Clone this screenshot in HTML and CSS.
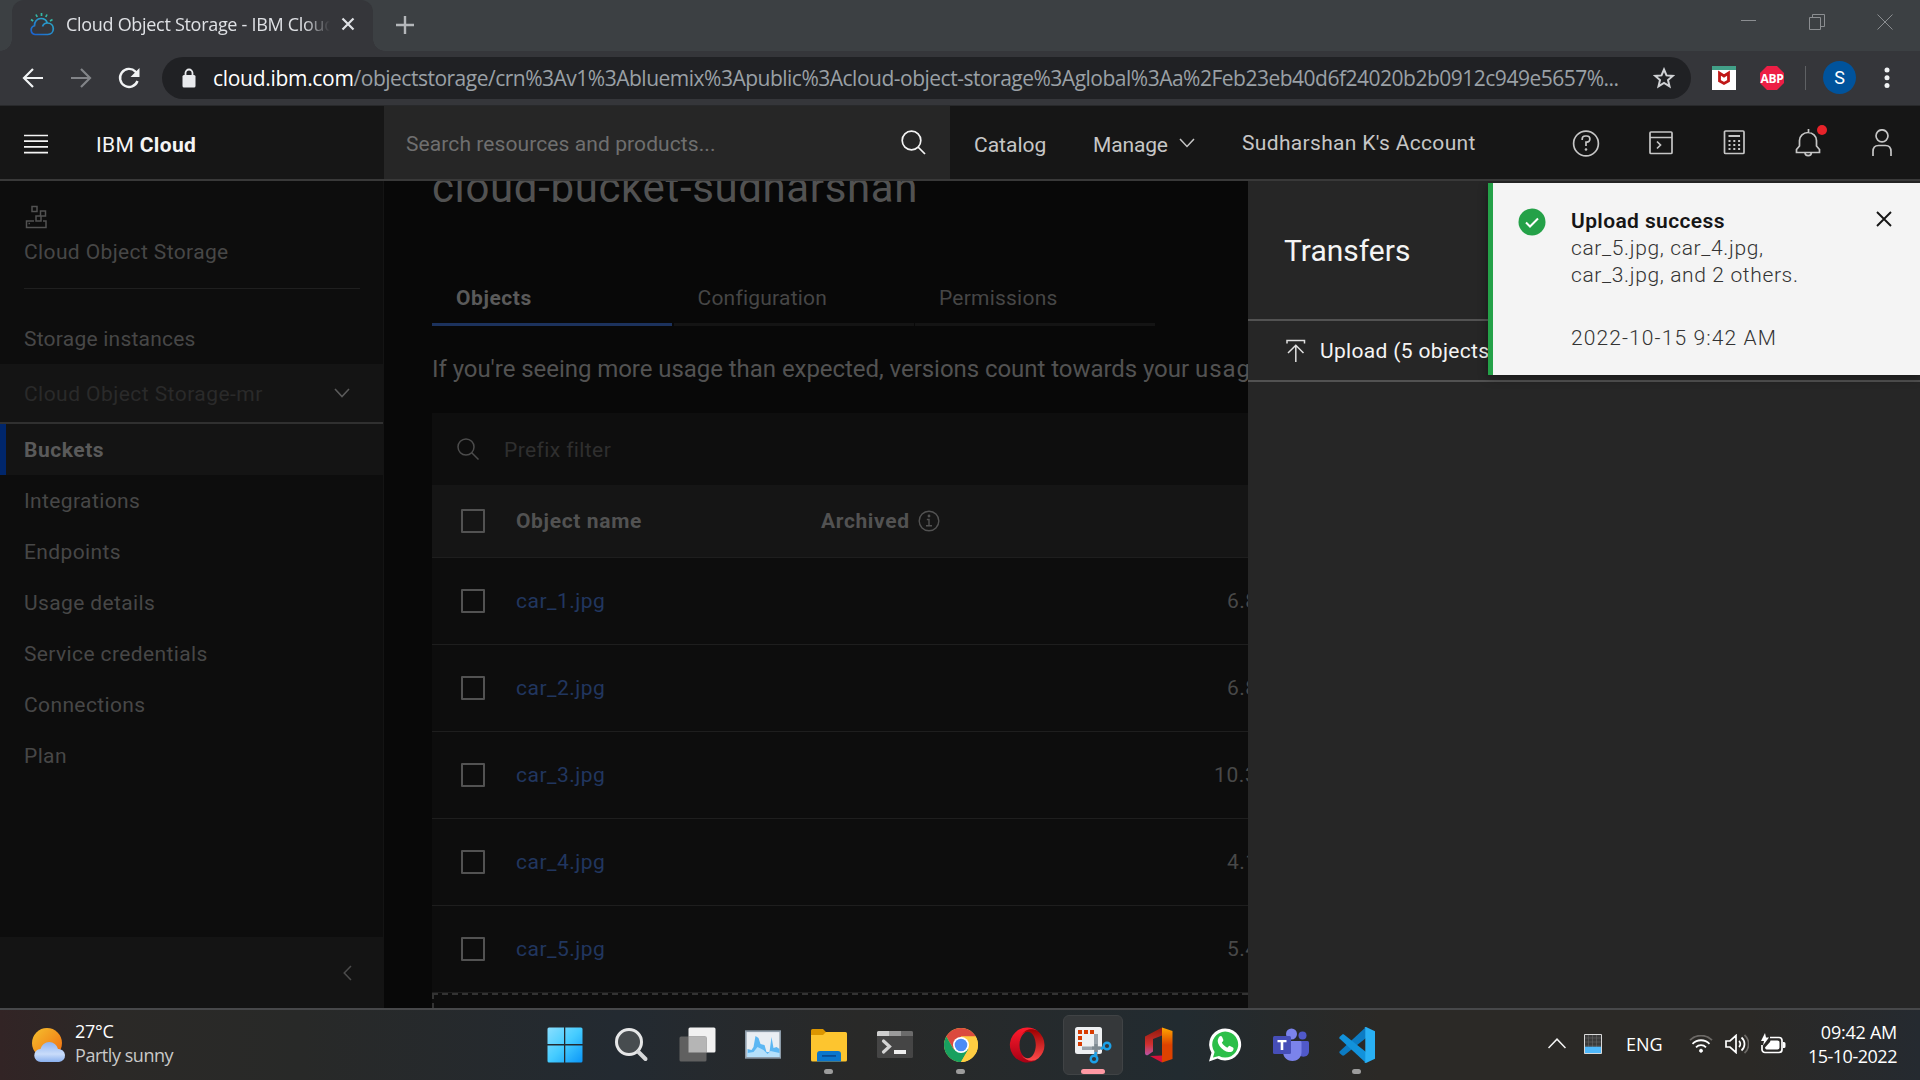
FILE: index.html
```html
<!DOCTYPE html>
<html lang="en">
<head>
<meta charset="utf-8">
<title>Cloud Object Storage - IBM Cloud</title>
<link rel="stylesheet" href="styles.css">
</head>
<body>
<div class="screen">

<div class="tabstrip">
  <div class="tab">
    <svg class="favicon" width="26" height="24" viewBox="0 0 26 24" fill="none" stroke-width="1.7">
      <defs><linearGradient id="cl" x1="0" y1="1" x2="1" y2="0"><stop offset="0" stop-color="#1a5fd0"/><stop offset="1" stop-color="#2fb4c8"/></linearGradient></defs>
      <path stroke="url(#cl)" d="M6 22.500a4.500 4.500 0 0 1-.5-8.800C5.500 9.500 8 6.500 12 6.500c3.500 0 5.500 2 6.300 4.500 3.500 0 6 2.300 6 5.800 0 3.400-2.500 5.700-5.500 5.700zM13.500 14.500c.8-2.300 2.500-3.500 4.800-3.500"/>
      <path stroke="#35b7a6" d="M12.500 1v3M7 2.500l1.200 2.500M18 2.500L16.800 5M2 7.500L4.200 9M23.500 7.500L21 9"/>
    </svg>
    <span class="tab-title">Cloud Object Storage - IBM Cloud</span>
    <svg class="tab-close" width="14" height="14" viewBox="0 0 14 14" stroke="#dfe1e5" stroke-width="2.200"><path d="M1.500 1.500l11 11M12.500 1.500l-11 11"/></svg>
  </div>
  <svg class="newtab" width="18" height="18" viewBox="0 0 18 18" stroke="#b4b7ba" stroke-width="2.400"><path d="M9 0v18M0 9h18"/></svg>
  <div class="wincontrols">
    <svg width="16" height="16" viewBox="0 0 16 16" stroke="#8b8e91" fill="none"><path d="M0 6.500h15"/></svg>
    <svg width="16" height="16" viewBox="0 0 16 16" stroke="#8b8e91" fill="none"><path d="M.5 3.500h11v12H.5zM3.500 3.500v-3h12v12h-4"/></svg>
    <svg width="16" height="16" viewBox="0 0 16 16" stroke="#8b8e91" fill="none"><path d="M.5.5l15 15M15.500.5l-15 15"/></svg>
  </div>
</div>

<div class="toolbar">
  <svg class="nav-ic" width="24" height="24" viewBox="0 0 24 24" fill="none" stroke="#f1f3f4" stroke-width="2.200"><path d="M22 12H4M12 3l-9 9 9 9"/></svg>
  <svg class="nav-ic" width="24" height="24" viewBox="0 0 24 24" fill="none" stroke="#828488" stroke-width="2.200"><path d="M2 12h18M12 3l9 9-9 9"/></svg>
  <svg class="nav-ic" width="24" height="24" viewBox="0 0 24 24" fill="none" stroke="#f1f3f4" stroke-width="2.400"><path d="M20.500 15A9 9 0 1 1 18.500 5.600L21 8"/><path fill="#f1f3f4" stroke="none" d="M22.500 2v9h-9z"/></svg>
  <div class="omnibox">
    <svg class="lock" width="14" height="20" viewBox="0 0 14 20"><rect x="0.500" y="7" width="13" height="12.500" rx="1.500" fill="#e8eaed"/><path d="M3.500 8V5a3.500 3.500 0 0 1 7 0v3" fill="none" stroke="#e8eaed" stroke-width="1.800"/></svg>
    <span class="url"><b>cloud.ibm.com</b>/objectstorage/crn%3Av1%3Abluemix%3Apublic%3Acloud-object-storage%3Aglobal%3Aa%2Feb23eb40d6f24020b2b0912c949e5657%...</span>
    <svg class="star" width="22" height="22" viewBox="0 0 22 22" fill="none" stroke="#d0d2d5" stroke-width="2"><path d="M11 2.500l2.500 5.900 6.300.5-4.800 4.200 1.500 6.200L11 16l-5.500 3.300L7 13.100 2.200 8.900l6.300-.5z"/></svg>
  </div>
  <svg class="ext" width="24" height="24" viewBox="0 0 24 24"><path fill="#fff" d="M0 0h24v24H0z"/><path fill="#42a088" d="M0 0h24v4H0z"/><path fill="none" stroke="#c01818" stroke-width="2.800" d="M7.500 7v8L12 17.500l4.500-2.500V7L12 10z"/></svg>
  <svg class="ext abp" width="24" height="24" viewBox="0 0 24 24"><path fill="#ed1e45" d="M7 0h10l7 7v10l-7 7H7l-7-7V7z"/><text x="12" y="16.500" text-anchor="middle">ABP</text></svg>
  <i class="tb-div"></i>
  <span class="avatar">S</span>
  <svg class="dots" width="6" height="22" viewBox="0 0 6 22" fill="#f1f3f4"><circle cx="3" cy="3" r="2.500"/><circle cx="3" cy="10.700" r="2.500"/><circle cx="3" cy="18.400" r="2.500"/></svg>
</div>

<header class="ibm">
  <div class="brand">
    <svg width="24" height="20" viewBox="0 0 24 20" stroke="#f4f4f4" stroke-width="1.700"><path d="M0 1.500h24M0 7.200h24M0 12.900h24M0 18.600h24"/></svg>
    <span class="brand-name">IBM <b>Cloud</b></span>
  </div>
  <div class="search"><span>Search resources and products...</span>
    <svg width="25" height="25" viewBox="0 0 25 25" fill="none" stroke="#f4f4f4" stroke-width="1.700"><circle cx="10.500" cy="10.500" r="9.300"/><path d="M17 17l7 7"/></svg>
  </div>
  <span class="link l1">Catalog</span>
  <span class="link l2">Manage</span>
  <svg class="chev" width="16" height="10" viewBox="0 0 16 10" fill="none" stroke="#c6c6c6" stroke-width="1.500"><path d="M1 1l7 7.500L15 1"/></svg>
  <span class="link l3">Sudharshan K's Account</span>
  <div class="hicons">
    <svg width="28" height="28" viewBox="0 0 28 28" fill="none" stroke="#c6c6c6" stroke-width="1.700"><circle cx="14" cy="14.500" r="12.400"/><path d="M10.200 11V10a3 3 0 0 1 3-3h1.600a3.100 3.100 0 0 1 0 6.200H14V17"/><circle cx="14" cy="20.500" r="1" fill="#c6c6c6" stroke-width=".6"/></svg>
    <svg width="28" height="28" viewBox="0 0 28 28" fill="none" stroke="#c6c6c6" stroke-width="1.700"><rect x="4" y="3" width="22" height="21.500" rx="1"/><path d="M4 8.500h22M11 12.500l3.500 3.500-3.500 3.500"/></svg>
    <svg width="28" height="28" viewBox="0 0 28 28" fill="none" stroke="#c6c6c6" stroke-width="1.700"><rect x="4.500" y="2" width="19.500" height="22.500" rx="1"/><path stroke-width="2" d="M8.500 7h11.500"/><path stroke-width="2" stroke-dasharray="2 2.800" d="M8.500 12h11.600M8.500 16h11.600M8.500 20h11.600"/></svg>
    <svg width="28" height="28" viewBox="0 0 28 28" fill="none" stroke="#c6c6c6" stroke-width="1.700"><path d="M14.500 0v3.500M2.500 23.500v-3l3-3.500v-5.500a8.500 8 0 0 1 17 0V17l3 3.500v3zM11 23.500a3.200 3.200 0 0 0 6.400 0"/></svg>
    <svg width="28" height="28" viewBox="0 0 28 28" fill="none" stroke="#c6c6c6" stroke-width="1.700"><circle cx="14" cy="6.800" r="6"/><path d="M5 27v-4.500c0-4 2-6 5.500-6h7c3.500 0 5.500 2 5.500 6V27"/></svg>
    <i class="reddot"></i>
  </div>
</header>

<div class="content">
  <nav class="side">
    <div class="side-top">
      <svg width="24" height="24" viewBox="0 0 24 24" fill="none" stroke="#525252" stroke-width="1.500"><path d="M8 1.500h5v5H8zM16.500 6h5v5h-5zM12 11h5v5h-5zM10 16H2.500v6.500H22V16h-3M4.500 18.500h1.500"/></svg>
      <span>Cloud Object Storage</span>
    </div>
    <span class="si inst">Storage instances</span>
    <div class="dd"><span>Cloud Object Storage-mr</span><svg width="16" height="10" viewBox="0 0 16 10" fill="none" stroke="#5a5a5a" stroke-width="1.600"><path d="M1 1l7 7.500L15 1"/></svg></div>
    <span class="si on">Buckets</span>
    <span class="si">Integrations</span>
    <span class="si">Endpoints</span>
    <span class="si">Usage details</span>
    <span class="si">Service credentials</span>
    <span class="si">Connections</span>
    <span class="si">Plan</span>
    <div class="collapse"><svg width="9" height="16" viewBox="0 0 9 16" fill="none" stroke="#4c4c4c" stroke-width="1.500"><path d="M8 1L1.200 8 8 15"/></svg></div>
  </nav>

  <main class="main">
    <h1>cloud-bucket-sudharshan</h1>
    <div class="tabs"><span class="t on">Objects</span><span class="t">Configuration</span><span class="t">Permissions</span></div>
    <p class="note">If you're seeing more usage than expected, versions count towards your <span>usage</span></p>
    <div class="filter"><svg width="22" height="22" viewBox="0 0 22 22" fill="none" stroke="#4c4c4c" stroke-width="1.500"><circle cx="9" cy="9" r="8"/><path d="M14.500 14.500l7 7"/></svg><span>Prefix filter</span></div>
    <div class="row head"><i class="cb"></i><span class="name">Object name</span><span class="arch">Archived</span>
      <svg width="22" height="22" viewBox="0 0 22 22" fill="none" stroke="#525252" stroke-width="1.400"><circle cx="11" cy="11" r="9.800"/><path d="M8.800 9.500H11v6M8 15.800h6"/><circle cx="11" cy="6" r=".7" fill="#525252"/></svg></div>
    <div class="row"><i class="cb"></i><span class="name">car_1.jpg</span><span class="size">6.8</span></div>
    <div class="row"><i class="cb"></i><span class="name">car_2.jpg</span><span class="size">6.8</span></div>
    <div class="row"><i class="cb"></i><span class="name">car_3.jpg</span><span class="size wide">10.3</span></div>
    <div class="row"><i class="cb"></i><span class="name">car_4.jpg</span><span class="size">4.1</span></div>
    <div class="row"><i class="cb"></i><span class="name">car_5.jpg</span><span class="size">5.4</span></div>
    <div class="drop"></div>
  </main>

  <aside class="panel">
    <div class="p-title">Transfers</div>
    <div class="p-row"><svg width="20" height="24" viewBox="0 0 20 24" fill="none" stroke="#e0e0e0" stroke-width="1.500"><path d="M1 4.500V1.500h17.500v3M9.800 23V6.500M2 14l7.800-7.700L17.500 14"/></svg><span>Upload (5 objects)</span></div>
  </aside>

  <div class="toast">
    <svg class="ok" width="28" height="28" viewBox="0 0 28 28"><circle cx="14" cy="14" r="13.500" fill="#24a148"/><path d="M8 14.500l4 4 8-8" fill="none" stroke="#fff" stroke-width="2"/></svg>
    <div class="toast-body"><b>Upload success</b><span>car_5.jpg, car_4.jpg,</span><span>car_3.jpg, and 2 others.</span><span class="date">2022-10-15 9:42 AM</span></div>
    <svg class="x" width="16" height="16" viewBox="0 0 16 16" stroke="#161616" stroke-width="1.900"><path d="M1 1l14 14M15 1L1 15"/></svg>
  </div>
</div>

<footer class="taskbar">
  <div class="weather">
    <svg width="36" height="36" viewBox="0 0 36 36"><defs><linearGradient id="sun" x1="0" y1="0" x2="1" y2="1"><stop offset="0" stop-color="#f5c12e"/><stop offset="1" stop-color="#f06a10"/></linearGradient><linearGradient id="cd" x1="0" y1="0" x2="0" y2="1"><stop offset="0" stop-color="#8fb4f2"/><stop offset=".6" stop-color="#c9dcfa"/><stop offset="1" stop-color="#8ab0ee"/></linearGradient></defs><circle cx="16" cy="16" r="15" fill="url(#sun)"/><path fill="url(#cd)" d="M10 35a6.500 6.500 0 0 1-.5-13 9 9 0 0 1 17.500 0 6.500 6.500 0 0 1 1 13z"/></svg>
    <div><span>27°C</span><span class="dim">Partly sunny</span></div>
  </div>

  <div class="apps">
    <div class="app"><svg width="36" height="36" viewBox="0 0 36 36"><defs><linearGradient id="wn" x1="0" y1="0" x2="1" y2="1"><stop offset="0" stop-color="#8adfff"/><stop offset=".5" stop-color="#45ccff"/><stop offset="1" stop-color="#0a96f8"/></linearGradient></defs><path fill="url(#wn)" d="M2 .5h15v16.600H.500V2A1.500 1.500 0 0 1 2 .5zM18.300.5H34A1.500 1.500 0 0 1 35.500 2v15.100H18.300zM.5 18.500H17v17H2A1.500 1.500 0 0 1 .5 34zM18.300 18.500h17.200V34a1.500 1.500 0 0 1-1.500 1.500H18.300z"/></svg></div>
    <div class="app"><svg width="36" height="36" viewBox="0 0 36 36"><circle cx="16" cy="15" r="12.500" fill="#474c4f" stroke="#e6e7e8" stroke-width="3"/><path d="M25 24.500l7.500 7.500" stroke="#d6d8da" stroke-width="4" stroke-linecap="round"/></svg></div>
    <div class="app"><svg width="38" height="36" viewBox="0 0 38 36"><rect x="10.500" y="0.500" width="27" height="25" rx="1.500" fill="#f1f1f1"/><rect x="1.500" y="9.500" width="27" height="25" rx="1.500" fill="#606060"/><path fill="#b5b5b5" d="M10.500 9.500h18v16h-18z"/></svg></div>
    <div class="app"><svg width="36" height="36" viewBox="0 0 36 36"><rect x=".7" y="4.200" width="34.600" height="26.600" fill="#e9eef3" stroke="#8c9ba8" stroke-width="1.800"/><path fill="#5cb7f3" d="M2.500 22l4 1 2-3 2-11 3 2 2 6 4 1 2 7h3l2-15 2 11 3-1 3 2v7.500H2.500z"/><path fill="#b5e0fb" d="M2.500 26l6-1 4-5 6 3 4 4 3-3 9 2v4H2.500z"/></svg></div>
    <div class="app run"><svg width="36" height="36" viewBox="0 0 36 36"><path fill="#dc9600" d="M0 3.500A1.500 1.500 0 0 1 1.500 2H12l3 3v6H0z"/><path fill="#fdc52f" d="M0 8h12l3-3h19.500A1.500 1.500 0 0 1 36 6.500V33a1.500 1.500 0 0 1-1.500 1.500h-33A1.500 1.500 0 0 1 0 33z"/><path fill="#0b76cc" d="M6 34.500V27a3 3 0 0 1 3-3h18a3 3 0 0 1 3 3v7.500z"/><path fill="#084c94" d="M11 28h14v1.800H11z"/></svg></div>
    <div class="app"><svg width="36" height="36" viewBox="0 0 36 36"><rect y="4" width="36" height="27" rx="1.500" fill="#454545"/><path fill="#cfcfcf" d="M0 9V5.500A1.500 1.500 0 0 1 1.500 4H12v5z"/><path fill="#9b9b9b" d="M12 4h12v5H12z"/><path fill="#6b6b6b" d="M24 4h10.500A1.500 1.500 0 0 1 36 5.500V9H24z"/><path d="M6.500 14l6 5.500-6 5.500" fill="none" stroke="#d5d5d5" stroke-width="3.200" stroke-linecap="round"/><path fill="#eee" d="M17 23h12v4H17z"/></svg></div>
    <div class="app run"><svg width="36" height="36" viewBox="0 0 36 36"><circle cx="18" cy="18" r="17" fill="#ffcd42"/><path fill="#db4a3e" d="M3.300 9.500A17 17 0 0 1 32.700 9.500H18L10.600 22.200z"/><path fill="#18a05f" d="M3.300 9.500A17 17 0 0 0 18 35l7.400-12.700H10.600z"/><path fill="#ffcd42" d="M18 35A17 17 0 0 0 32.700 9.500H18l7.400 12.800z"/><circle cx="18" cy="18" r="8" fill="#fff"/><circle cx="18" cy="18" r="6.300" fill="#4b8bf5"/></svg></div>
    <div class="app"><svg width="36" height="36" viewBox="0 0 36 36"><defs><linearGradient id="op" x1="0" y1="0" x2="0" y2="1"><stop offset="0" stop-color="#ff1b2d"/><stop offset="1" stop-color="#a70014"/></linearGradient><linearGradient id="oq" x1="0" y1="0" x2="0" y2="1"><stop offset="0" stop-color="#9c0000"/><stop offset="1" stop-color="#ff4b4b"/></linearGradient></defs><path fill="url(#op)" d="M18 .5a17.500 17.500 0 1 0 11.500 31C22 36.300 10.500 31 10.500 18S22 -.3 29.500 4.500A17.500 17.500 0 0 0 18 .5z"/><path fill="url(#oq)" d="M12.400 8C17 .7 25 1 29.500 4.800a17.500 17.500 0 0 1 0 26.400c-5 4-12.500 3.500-17.100-3.200C20 36 26.800 28 26.800 18S20 0 12.400 8z"/></svg></div>
    <div class="app active"><svg width="38" height="38" viewBox="0 0 38 38"><rect x="1" y="1" width="27" height="27" rx="2.500" fill="#eef0f2"/><path fill="#d83b01" d="M4 4h4v4H4zM10 4h4v4h-4zM16 4h4v4h-4zM4 10h4v4H4zM4 16h4v4H4z"/><path fill="#9aa3ab" d="M20 8h4v18h-4zM8 20.500h18v3.500H8z"/><path stroke="#7e8991" stroke-width="3" d="M22 18v12M18 22h11"/><circle cx="33" cy="20" r="3.300" fill="none" stroke="#1ba1e8" stroke-width="2.400"/><circle cx="20" cy="33" r="3.300" fill="none" stroke="#1ba1e8" stroke-width="2.400"/><path stroke="#1ba1e8" stroke-width="2.500" d="M27 23l3-2M21 30l1-4"/></svg></div>
    <div class="app"><svg width="30" height="36" viewBox="0 0 30 36"><defs><linearGradient id="of" x1="0" y1="0" x2="0" y2="1"><stop offset="0" stop-color="#8f1a0b"/><stop offset=".6" stop-color="#d0302f"/><stop offset="1" stop-color="#b955a8"/></linearGradient><linearGradient id="og" x1="0" y1="0" x2="0" y2="1"><stop offset="0" stop-color="#ffa800"/><stop offset=".5" stop-color="#dd4200"/></linearGradient></defs><path fill="url(#of)" d="M1 9.500L18 .5v8L9 12v12.500L4 28c-2 1-3-.5-3-2z"/><path fill="url(#og)" d="M18 .5l10.500 3.600v28L18 35.500z"/><path fill="#d6123c" d="M6 29l12-.5v7z"/></svg></div>
    <div class="app"><svg width="34" height="36" viewBox="0 0 34 36"><path fill="#fff" d="M1 34.500l2.500-8.700A16 16 0 1 1 9.500 31.500z"/><path fill="#2cbf49" d="M5 30.500l1.600-5.400A13 13 0 1 1 11 29z"/><path fill="#fff" d="M11.500 9.500c.8-.7 2-.7 2.500.3l1.300 3c.4 1-.8 2-1.500 2.800 1.200 2.300 3.300 4.200 5.600 5.200.8-.8 1.600-2.300 2.600-1.900l3 1.500c1.200.7.3 3.200-.9 4-5.500 3.300-16.500-6.600-14-12.500.3-.8.700-1.700 1.400-2.400z"/></svg></div>
    <div class="app"><svg width="38" height="36" viewBox="0 0 38 36"><circle cx="30.500" cy="8.500" r="4" fill="#5059c9"/><path fill="#5059c9" d="M26 14h9.500A1.500 1.500 0 0 1 37 15.500V24c0 7-8 7-11 3z"/><circle cx="19.500" cy="7" r="5.500" fill="#7b83eb"/><path fill="#7b83eb" d="M12 14h16a1.500 1.500 0 0 1 1.500 1.500V25c0 12-18 12-18.500 0z"/><rect x="1" y="9" width="18" height="18" rx="1.500" fill="#464eb8"/><path fill="#fff" d="M5.500 13h9v2.200h-3.200V23H8.700v-7.800H5.500z"/></svg></div>
    <div class="app run"><svg width="38" height="38" viewBox="0 0 38 38"><path fill="#0c7cc4" d="M1.500 25.500a2 2 0 0 0 0 1.500l2.500 2.300c.7.600 1.500.6 2.300 0L28 12V1z"/><path fill="#1292db" d="M1.500 12.500a2 2 0 0 1 0-1.500L4 8.800c.7-.6 1.500-.6 2.300 0L28 26v11z"/><path fill="#29b0f4" d="M28 1l9 4.300v27.400L28 37c-.8.300-1.500 0-2-.5l1.300.3V1.500L26 1.400c.5-.4 1.200-.7 2-.4z"/></svg></div>
  </div>

  <div class="tray">
    <svg class="up" width="18" height="11" viewBox="0 0 18 11" fill="none" stroke="#f3f3f3" stroke-width="1.500"><path d="M.5 10L9 1.200l8.500 8.800"/></svg>
    <svg class="meter" width="18" height="20" viewBox="0 0 18 20"><path fill="#3a3a3a" d="M0 0h18v20H0z"/><path stroke="#666" stroke-width=".6" d="M4.500 0v13M8.500 0v13M12.500 0v13M0 4h17M0 8h17M0 12h17"/><path fill="#4fb8fb" d="M0 12.700h17v6.800H0z"/><path fill="none" stroke="#d8d8d8" d="M.5.5h17v19H.5z"/></svg>
    <span class="eng">ENG</span>
    <svg class="wifi" width="24" height="18" viewBox="0 0 24 18" fill="none" stroke="#fff" stroke-width="1.800"><path stroke="#6c6966" d="M1 5.200a15.500 15.500 0 0 1 22 0"/><path d="M3.500 8.800a12 12 0 0 1 17 0M7 12.300a7 7 0 0 1 10 0"/><circle cx="12" cy="15.700" r="1.500" fill="#fff" stroke-width="1"/></svg>
    <svg class="vol" width="24" height="20" viewBox="0 0 24 20" fill="none" stroke="#fff" stroke-width="1.700"><path d="M1 7h4l6-5.500v17L5 13H1zM14 7a4 4 0 0 1 0 6M16.500 3.500a8.500 8.500 0 0 1 0 13"/><path stroke="#6c6966" d="M19.500 1a12 12 0 0 1 0 18"/></svg>
    <svg class="bat" width="25" height="21" viewBox="0 0 25 21"><path fill="none" stroke="#fff" stroke-width="1.700" d="M9 4.500h9a3 3 0 0 1 3 3v9a3 3 0 0 1-3 3H4a3 3 0 0 1-3-3V12"/><path fill="#fff" d="M9.500 7.500h7a2 2 0 0 1 2 2v5a2 2 0 0 1-2 2h-11a2 2 0 0 1-1.500-2L9 9zM22 9h1a1.500 1.500 0 0 1 1.500 1.500v3A1.500 1.500 0 0 1 23 15h-1zM4 0L0 8h3l-1 4.500L8 4.500H5z"/></svg>
    <div class="clock"><span class="c1">09:42 AM</span><span class="c2">15-10-2022</span></div>
  </div>
</footer>
</div>
</body>
</html>
```
FILE: styles.css
```css
* { box-sizing: border-box; }
body { margin: 0; background: #000; }
svg { display: block; flex: none; }
.screen { width: 1920px; height: 1080px; overflow: hidden; display: flex; flex-direction: column; font-family: Roboto, "Liberation Sans", sans-serif; white-space: nowrap; }

/* browser chrome */
.tabstrip, .toolbar { font-family: "Open Sans", "Noto Sans", sans-serif; display: flex; flex: none; }
.tabstrip { height: 51px; background: #3c4043; padding-left: 12px; align-items: center; }
.tab { position: relative; width: 361px; height: 51px; background: #35363a; border-radius: 12px 12px 0 0; display: flex; align-items: center; padding: 0 18px 3px 17px; }
.tab::before, .tab::after { content: ""; position: absolute; bottom: 0; width: 12px; height: 12px; }
.tab::before { left: -12px; background: radial-gradient(circle at 0 0, transparent 11.500px, #35363a 12px); }
.tab::after { right: -12px; background: radial-gradient(circle at 100% 0, transparent 11.500px, #35363a 12px); }
.favicon { margin-right: 11px; }
.tab-title { width: 265px; overflow: hidden; font-size: 18px; letter-spacing: -0.300px; color: #dfe1e5; -webkit-mask-image: linear-gradient(90deg, #000 238px, transparent 264px); mask-image: linear-gradient(90deg, #000 238px, transparent 264px); }
.tab-close { margin-left: 10px; }
.newtab { margin-left: 23px; margin-bottom: 1px; }
.wincontrols { margin-left: auto; display: flex; gap: 52px; padding: 0 27px 8px 0; }
.toolbar { height: 55px; background: #35363a; border-bottom: 1px solid #28292b; align-items: center; padding: 0 30px 1px 21px; }
.nav-ic { margin-right: 24px; }
.omnibox { width: 1529px; height: 42px; margin-left: -3px; border-radius: 21px; background: #202124; display: flex; align-items: center; padding: 0 16px 0 20px; flex: none; }
.lock { margin-right: 17px; }
.url { width: 1407px; font-size: 21px; letter-spacing: -0.500px; color: #9aa0a6; }
.url b { font-weight: 400; color: #fff; letter-spacing: -0.300px; }
.star { margin-left: 33px; }
.ext { margin-left: 21px; }
.abp { margin-left: 24px; }
.abp text { font: 700 12px "Open Sans", sans-serif; letter-spacing: -0.300px; fill: #fff; }
.tb-div { width: 1px; height: 24px; background: #5f6164; margin-left: 21px; }
.avatar { width: 33px; height: 33px; margin-left: 17px; border-radius: 50%; background: #00539c; color: #fff; font: 18px/33px Roboto, sans-serif; text-align: center; }
.dots { margin-left: 28px; }

/* cloud header */
.ibm { height: 75px; flex: none; background: #161616; border-bottom: 2px solid #393939; display: flex; align-items: center; font-size: 21px; color: #c6c6c6; }
.brand { width: 384px; display: flex; align-items: center; padding: 2px 0 0 24px; gap: 48px; color: #f4f4f4; }
.brand-name { letter-spacing: 0.350px; padding-top: 2px; }
.brand-name b { font-weight: 700; }
.search { width: 566px; height: 73px; background: #262626; color: #6f6f6f; display: flex; align-items: center; justify-content: space-between; padding: 0 24px 0 22px; letter-spacing: 0.090px; }
.search span { padding-top: 2px; }
.link { padding-top: 4px; letter-spacing: -0.150px; }
.l1 { margin-left: 24px; width: 119px; letter-spacing: 0; }
.l2 { width: 86px; }
.chev { margin-right: 47px; }
.link.l3 { padding: 0; width: 330px; letter-spacing: 0.330px; }
.hicons { position: relative; display: flex; gap: 46px; }
.reddot { position: absolute; left: 245px; top: -4px; width: 10px; height: 10px; border-radius: 50%; background: #e8232a; }

/* page */
.content { position: relative; height: 827px; flex: none; display: flex; overflow: hidden; font-size: 21px; }
.side { width: 384px; flex: none; background: #0d0d0d; border-right: 1px solid #141414; color: #474747; display: flex; flex-direction: column; letter-spacing: 0.380px; }
.side-top { margin: 24px 23px 0 24px; height: 84px; border-bottom: 1px solid #1f1f1f; display: flex; flex-direction: column; gap: 11px; }
.si { height: 51px; line-height: 53px; padding-left: 24px; }
.inst { margin: 24px 0 0; letter-spacing: 0.230px; }
.dd { height: 60px; background: #141414; border-bottom: 2px solid #303030; color: #2a2a2a; display: flex; align-items: center; justify-content: space-between; padding: 0 33px 0 24px; letter-spacing: 0.450px; }
.dd span { padding-top: 2px; }
.on.si { background: #141414; border-left: 6px solid #00266b; padding-left: 18px; color: #5a5a5a; font-weight: 700; letter-spacing: 0.550px; }
.collapse { margin-top: auto; height: 71px; background: #141414; display: flex; justify-content: flex-end; align-items: center; padding-right: 31px; }

.main { width: 864px; flex: none; background: #080808; padding-left: 48px; overflow: hidden; color: #525252; letter-spacing: 0.350px; }
h1 { margin: -18px 0 0; font-size: 42px; line-height: 50px; font-weight: 400; color: #525252; letter-spacing: 0.640px; }
.tabs { display: flex; gap: 1.500px; margin-top: 56px; height: 57px; }
.t { width: 240px; border-bottom: 3px solid #141414; padding: 0 24px; line-height: 58px; color: #464646; letter-spacing: 0.220px; }
.t.on { border-color: #1c325d; color: #5a5a5a; font-weight: 700; letter-spacing: 0.550px; }
.note { margin: 29px 0 0; font-size: 24px; line-height: 28px; width: 1000px; letter-spacing: -0.050px; }
.note span { letter-spacing: 1px; }
.filter { height: 72px; margin-top: 30px; background: #0e0e0e; display: flex; align-items: center; padding-left: 25px; gap: 25px; color: #2f2f2f; letter-spacing: 0.400px; }
.filter span { padding-top: 1px; }
.row { height: 87px; background: #0d0d0d; border-top: 1px solid #1e1e1e; display: flex; align-items: center; padding-left: 29px; }
.row.head { height: 72px; border: 0; background: #151515; font-weight: 700; letter-spacing: 0.640px; }
.cb { width: 24px; height: 24px; border: 2px solid #525252; border-radius: 1px; flex: none; }
.name { width: 305px; margin-left: 31px; color: #21365f; flex: none; letter-spacing: 0.480px; }
.head .name { color: #525252; letter-spacing: 0.640px; }
.arch { margin-right: 8px; }
.size { margin-left: 406px; flex: none; color: #484848; letter-spacing: 0.500px; }
.size.wide { margin-left: 393px; letter-spacing: 0.600px; }
.drop { height: 60px; border-top: 1px solid #1e1e1e; background: repeating-linear-gradient(90deg, #333 0 6px, transparent 6px 10px) 0 0 / 100% 2px no-repeat, repeating-linear-gradient(180deg, #333 0 6px, transparent 6px 10px) 0 0 / 2px 100% no-repeat, #0d0d0d; }

.panel { flex: 1; background: #262626; color: #f4f4f4; }
.p-title { height: 140px; border-bottom: 2px solid #525252; line-height: 139px; padding-left: 36px; font-size: 30px; }
.p-row { height: 61px; border-bottom: 2px solid #525252; display: flex; align-items: center; padding-left: 38px; gap: 14px; letter-spacing: 0.330px; }
.toast { position: absolute; left: 1488px; top: 2px; width: 432px; height: 192px; background: #f4f4f4; border-left: 5px solid #24a148; box-shadow: 0 3px 9px rgba(0, 0, 0, .35); color: #333; display: flex; padding: 25px 28px 0 25px; }
.toast-body { margin-left: 25px; width: 305px; display: flex; flex-direction: column; line-height: 27px; }
.toast-body b { font-weight: 600; color: #161616; letter-spacing: 0.380px; }
.toast-body span { font-weight: 300; letter-spacing: 0.640px; }
.toast-body .date { margin-top: 36px; letter-spacing: 1.100px; }
.x { margin-top: 3px; }

/* taskbar */
.taskbar { flex: none; height: 72px; border-top: 2px solid #47484a; background: linear-gradient(90deg, #322425 0, #2b2927 110px, #282928 300px, #232a31 620px, #292928 860px, #222b30 1180px, #2b2926 1380px, #2b2926 1750px, #252a30 1920px); display: flex; color: #fff; font: 18px/24px "Open Sans", "Noto Sans", sans-serif; }
.weather { width: 531px; padding: 9px 0 0 31px; display: flex; gap: 8px; align-items: flex-start; }
.weather svg { margin-top: 8px; }
.weather span { display: block; letter-spacing: -0.250px; }
.weather .dim { color: #c9c9c9; letter-spacing: -0.450px; }
.apps { display: flex; align-items: center; margin-left: 1px; }
.app { position: relative; width: 60px; height: 60px; margin: 0 3px; border-radius: 6px; display: flex; align-items: center; justify-content: center; }
.app.active { background: #35383a; border: 1px solid #404345; }
.run::after, .active::after { content: ""; position: absolute; bottom: 1px; left: 25px; width: 9px; height: 5px; border-radius: 3px; background: #9c9c9c; }
.active::after { left: 17px; width: 24px; bottom: 0; background: #ff99a4; }
.tray { flex: 1; display: flex; align-items: center; justify-content: flex-end; padding: 0 23px 3px 0; }
.meter { margin-left: 18px; }
.eng { margin-left: 24px; width: 36px; }
.wifi { margin-left: 27px; }
.vol { margin-left: 12px; }
.bat { margin-left: 12px; }
.clock { width: 111px; text-align: right; }
.clock span { display: block; }
.c1 { letter-spacing: -0.250px; }
.c2 { letter-spacing: -0.480px; }
```
